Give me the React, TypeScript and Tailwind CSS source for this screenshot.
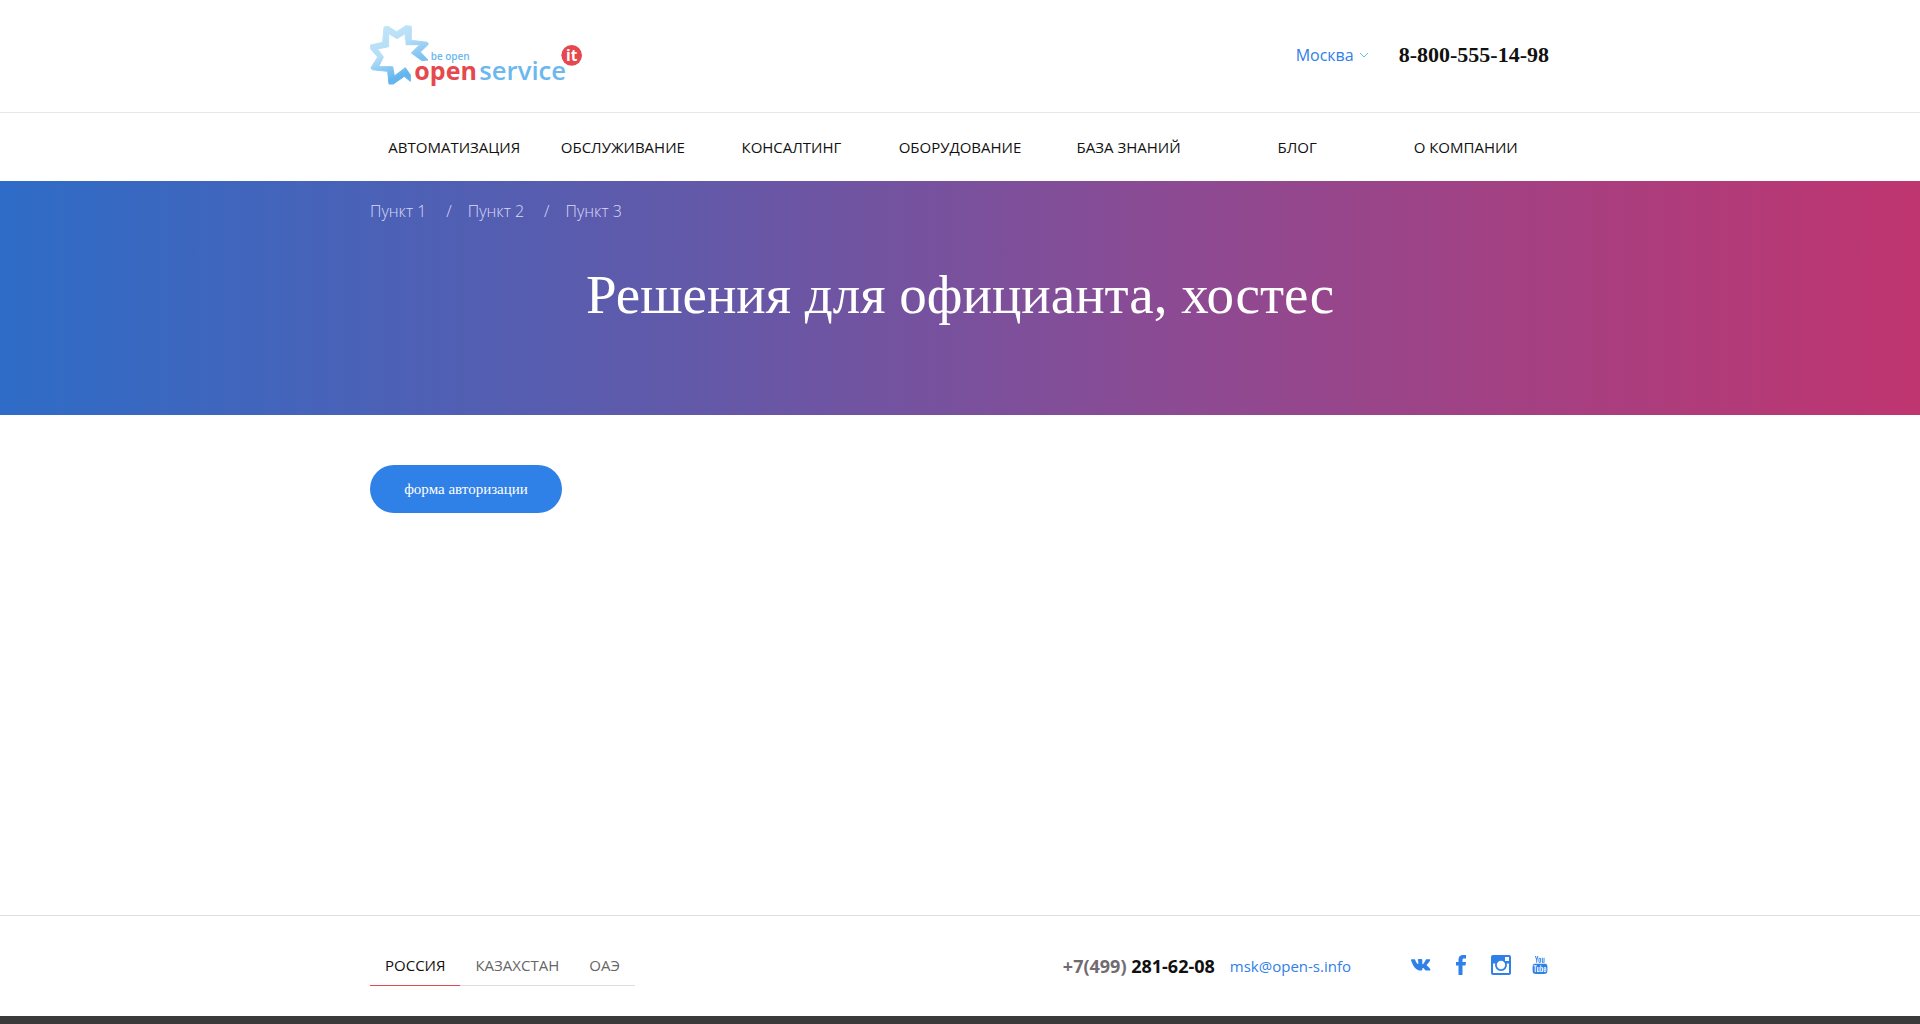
import React from "react";
import { TfiYoutube } from "react-icons/tfi";

const navItems = ["Автоматизация", "Обслуживание", "Консалтинг", "Оборудование", "База знаний", "Блог", "О компании"];
const crumbs = ["Пункт 1", "Пункт 2", "Пункт 3"];
const countries = ["Россия", "Казахстан", "ОАЭ"];

function Logo() {
  return (
    <svg viewBox="30 42 636 189" className="h-[63px] w-[212px]" role="img" aria-label="openservice it">
      <defs>
        <linearGradient id="star" x1="0" y1="0" x2="0.3" y2="1">
          <stop offset="0" stopColor="#c3e6fa" />
          <stop offset="0.55" stopColor="#b5ddf7" />
          <stop offset="1" stopColor="#62b5ee" />
        </linearGradient>
        <linearGradient id="arm" x1="0" y1="0" x2="0.4" y2="1">
          <stop offset="0" stopColor="#b5ddf7" />
          <stop offset="1" stopColor="#7cc2f1" />
        </linearGradient>
      </defs>
      <g strokeLinejoin="round" strokeWidth="3">
        <path
          d="M72 48L84 46L110 62L138 44L154 46V86H136V68L111 83L86 68V107L53 114L70 138L56 167H98L103 195L136 170L151 192V211L133 196L100 219H87L83 181L36 176L33 170L53 138L32 114L32 102L68 94Z"
          fill="url(#star)" stroke="url(#star)"
        />
        <path d="M138 86L202 94L205 100L181 123L204 147L186 149L154 126L179 101H138Z" fill="url(#arm)" stroke="url(#arm)" />
      </g>
      <g fontFamily="'Open Sans', sans-serif" fontWeight="600">
        <text x="212" y="146" fontSize="30" fill="#6cb8ee">be open</text>
        <text x="163" y="208" fontSize="75" fontWeight="700" fill="#e5484d">open</text>
        <text x="358" y="208" fontSize="77" fill="#6cb8ee">service</text>
      </g>
      <circle cx="635" cy="133" r="31" fill="#e5484d" />
      <text x="635" y="150" fontSize="46" fontWeight="700" textAnchor="middle" fill="#fff" fontFamily="'Open Sans', sans-serif">it</text>
    </svg>
  );
}

export default function App() {
  return (
    <div className="flex min-h-screen flex-col bg-white font-['Open_Sans',sans-serif] text-[15px] text-[#111]">
      <header>
        <div className="border-b border-[#e6e6e6]">
          <div className="mx-auto flex h-28 max-w-[1180px] items-center justify-between pr-px">
            <a href="#"><Logo /></a>
            <div className="flex items-center gap-[30px] pb-0.5">
              <button className="flex items-center gap-[5px] text-base text-[#2f80e7]">
                Москва
                <svg viewBox="0 0 10 6" className="h-[6px] w-[10px]" fill="none" stroke="#5cc0f0"><path d="M1 1l4 4 4-4" /></svg>
              </button>
              <a href="tel:88005551498" className="font-['Liberation_Serif',serif] text-[22px] font-bold leading-8">8-800-555-14-98</a>
            </div>
          </div>
        </div>
        <nav className="mx-auto grid h-[68px] max-w-[1180px] grid-cols-7 items-center text-center uppercase">
          {navItems.map((n) => <a key={n} href="#">{n}</a>)}
        </nav>
      </header>

      <section className="h-[234px] bg-linear-[90deg,#2e6cc7,#6458a8_37%,#8d4a92_62%,#bf3570] text-white">
        <div className="mx-auto max-w-[1180px] pt-[18px]">
          <ol className="flex text-base font-light text-[#dcd9fa]">
            {crumbs.map((c, i) => (
              <li key={c}>
                {i > 0 && <span className="pr-4 pl-5">/</span>}
                <a href="#">{c}</a>
              </li>
            ))}
          </ol>
          <h1 className="mt-10 text-center font-['Liberation_Serif',serif] text-[55px] leading-[64px]">Решения для официанта, хостес</h1>
        </div>
      </section>

      <main className="mx-auto w-full max-w-[1180px] flex-1 pt-[50px]">
        <button className="h-12 w-48 rounded-full bg-[#2f80e7] font-['Liberation_Serif',serif] text-[15px] text-white">форма авторизации</button>
      </main>

      <footer className="border-t border-[#dedede]">
        <div className="mx-auto flex h-[100px] max-w-[1180px] items-center justify-between pr-px">
          <div className="flex uppercase text-[#666]">
            {countries.map((c, i) => (
              <button key={c} className={i === 0 ? "h-10 border-b border-[#e5484d] px-[15px] uppercase text-[#111]" : "h-10 border-b border-[#dedede] px-[15px] uppercase"}>{c}</button>
            ))}
          </div>
          <div className="flex items-center">
            <a href="tel:+74992816208" className="text-[18px] font-bold"><span className="text-[#716b70]">+7(499)</span> 281-62-08</a>
            <a href="mailto:msk@open-s.info" className="ml-[15px] text-[#2f80e7]">msk@open-s.info</a>
            <Socials />
          </div>
        </div>
        <div className="h-2 bg-[#3a3a3a]" />
      </footer>
    </div>
  );
}

function Socials() {
  return (
    <div className="ml-[60px] flex items-center gap-5 pb-0.5 text-[#2f80e7]">
      <a href="#" aria-label="VK">
        <svg viewBox="0 0 20 12" className="h-3 w-5" fill="currentColor"><path d="M0 .9C0 .4.3.2.8.2h2.500c.5 0 .7.2.9.7.9 2 1.800 3.600 2.600 4.200.400.200.500-.200.500-.700V2.500C7.300 1.400 7 1.200 6.300 1c.6-.8 1.600-1 2.900-1 1.700 0 2.100.4 2.100 1.300v3.400c0 .6.4.7.8.3.9-.9 1.800-2.300 2.500-4 .2-.5.500-.8 1-.8h2.800c.7 0 .9.400.7 1-.6 1.600-1.900 3-3.100 4.400-.4.500-.3.800.1 1.200 1.100 1.100 2.300 2 3.100 3.300.5.800.1 1.500-.9 1.500h-2.500c-.9 0-1.500-.4-2.200-1.200-.6-.7-1-1.300-1.600-1.300-.5 0-.7.400-.7 1.200 0 1-.3 1.300-1.300 1.300C5.500 11.600 2.800 8.800.2 1.800z" /></svg>
      </a>
      <a href="#" aria-label="Facebook" className="px-[5px]">
        <svg viewBox="0 0 10 20" className="h-5 w-[10px]" fill="currentColor"><path d="M2.500 20V10.500H0V7h2.500V4.500C2.500 1.500 4.200 0 7 0h3v3.500H8c-1.200 0-1.500.5-1.500 1.500v2H10l-.5 3.500h-3V20z" /></svg>
      </a>
      <a href="#" aria-label="Instagram">
        <svg viewBox="0 0 20 20" className="size-5" fill="currentColor" fillRule="evenodd"><path d="M2 0h16a2 2 0 0 1 2 2v16a2 2 0 0 1-2 2H2a2 2 0 0 1-2-2V2a2 2 0 0 1 2-2zM14 2v4h4V2zM2 8.500V18h16V8.500h-2.200a6 6 0 1 1-11.600 0zM10 5.800a4.200 4.200 0 1 0 0 8.400 4.200 4.200 0 0 0 0-8.400z" /></svg>
      </a>
      <a href="#" aria-label="YouTube">
        <TfiYoutube className="h-5 w-[18px]" />
      </a>
    </div>
  );
}
